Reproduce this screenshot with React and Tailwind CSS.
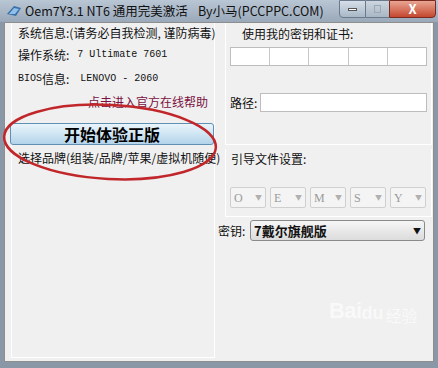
import React from 'react';

const CJK = { fontFamily: '"Noto Sans CJK SC", "Noto Sans", sans-serif' };

const KeyBox = () => <div className="h-[17px] flex-1 bg-white border-r border-[#c8c8c8] last:border-r-0" />;

const Combo = ({ letter }) => (
  <div className="flex h-[21px] w-[36px] items-center justify-between rounded-[2px] border border-[#cfcfcf] bg-[#f4f4f4] px-[3px]">
    <span className="font-['Liberation_Serif'] text-[12px] text-[#9a9a9a]">{letter}</span>
    <span className="text-[7px] text-[#b0b0b0]">▼</span>
  </div>
);

const Row = ({ className = '', children }) => (
  <div className={`flex h-[20px] items-center pl-[6px] ${className}`}>{children}</div>
);

export default function App() {
  return (
    <div className="relative h-[368px] w-[438px] overflow-hidden bg-[#8a97a6] whitespace-nowrap" style={CJK}>
      {/* title bar */}
      <div className="flex h-[22px] items-center bg-gradient-to-b from-[#b9c6d4] to-[#9aa9ba] pl-[6px] text-[12.5px] text-[#111]">
        <svg width="16" height="14" viewBox="0 0 16 14" className="mr-[3px]">
          <path d="M1 10 L8 2 L15 4 L10 12 Z" fill="#3a6fa8" />
          <path d="M3 10 L8 4 L13 5 L9 10 Z" fill="#8fc0ea" />
        </svg>
        <span className="w-[173px]">Oem7Y3.1 NT6 通用完美激活</span>
        <span>By小马(PCCPPC.COM)</span>
        <div className="ml-auto mr-[2px] flex h-[18px] self-start">
          <div className="flex w-[27px] items-center justify-center rounded-bl-[4px] border border-[#6b7a8a] bg-gradient-to-b from-[#d6dfe9] to-[#a9b7c6]">
            <div className="h-[3px] w-[9px] bg-white border border-[#555]" />
          </div>
          <div className="flex w-[23px] items-center justify-center border-y border-[#6b7a8a] bg-gradient-to-b from-[#cdd6e0] to-[#a9b6c4]">
            <div className="h-[8px] w-[7px] border border-[#9aa7b5]" />
          </div>
          <div className="flex w-[47px] items-center justify-center rounded-br-[4px] border border-[#7a2a20] bg-gradient-to-b from-[#e8a593] to-[#c4452d] text-[13px] font-bold text-white">
            X
          </div>
        </div>
      </div>

      {/* client area */}
      <div className="mx-[4px] flex h-[340px] border border-[#8e8e8e] bg-[#f0f0f0] text-[12px] text-[#111]">
        {/* left panel */}
        <div className="ml-[6px] mb-[3px] flex w-[204px] flex-col border-x border-b border-white">
          <Row>系统信息:(请务必自我检测, 谨防病毒)</Row>
          <Row className="mt-[2px]">
            操作系统: <span className="ml-[8px] font-['Liberation_Mono'] text-[10px] leading-none">7 Ultimate 7601</span>
          </Row>
          <Row className="mt-[4px]">
            <span className="font-['Liberation_Mono'] text-[10px] leading-none">BIOS</span>信息:
            <span className="ml-[11px] font-['Liberation_Mono'] text-[10px] leading-none">LENOVO - 2060</span>
          </Row>
          <Row className="mt-[3px] pl-[76px] text-[#7a1040]">点击进入官方在线帮助</Row>
          <button className="mt-[11px] -ml-[2px] h-[22px] w-[204px] rounded-[3px] border border-[#5f8fb2] bg-gradient-to-b from-[#eaf4fb] via-[#cfe5f3] to-[#b3d3ea] text-[16px] font-bold leading-[20px] text-black">
            开始体验正版
          </button>
          <Row className="mt-[3px]">选择品牌(组装/品牌/苹果/虚拟机随便)</Row>
        </div>

        {/* right panel */}
        <div className="ml-[10px] flex w-[207px] flex-col">
          <div className="flex h-[122px] flex-col border-x border-b border-white px-[4px]">
            <div className="mt-[1px] pl-[12px] leading-[20px]">使用我的密钥和证书:</div>
            <div className="mt-[3px] flex border border-[#bdbdbd]">
              <KeyBox /><KeyBox /><KeyBox /><KeyBox /><KeyBox />
            </div>
            <div className="mt-[27px] flex items-center">
              <span className="w-[30px]">路径:</span>
              <div className="h-[19px] flex-1 border border-[#bdbdbd] bg-white" />
            </div>
          </div>
          <div className="mt-[4px] flex h-[68px] flex-col border border-white border-t-0 px-[4px]">
            <div className="pl-[1px] leading-[20px]">引导文件设置:</div>
            <div className="mt-[18px] flex gap-[4px]">
              <Combo letter="O" /><Combo letter="E" /><Combo letter="M" /><Combo letter="S" /><Combo letter="Y" />
            </div>
          </div>
          <div className="mt-[3px] -ml-[7px] flex items-center">
            <span className="w-[32px]">密钥:</span>
            <div className="flex h-[21px] w-[175px] items-center justify-between rounded-[3px] border border-[#8a8a8a] bg-gradient-to-b from-[#f6f6f6] to-[#dcdcdc] px-[3px]">
              <span className="text-[13px] font-bold">7戴尔旗舰版</span>
              <span className="text-[8px]">▼</span>
            </div>
          </div>
          <div className="mt-auto mb-[34px] ml-[104px] flex items-end text-white">
            <span className="font-['Liberation_Sans'] text-[22px] font-bold tracking-tight opacity-60">Bai</span>
            <span className="font-['Liberation_Sans'] text-[18px] font-bold opacity-60">du</span>
            <span className="ml-[2px] text-[16px] opacity-60">经验</span>
          </div>
        </div>
      </div>

      {/* annotation ellipse */}
      <svg className="pointer-events-none absolute left-0 top-0" width="438" height="368">
        <ellipse cx="110" cy="142" rx="106" ry="37" transform="rotate(3 110 142)" fill="none" stroke="#c0262a" strokeWidth="2.5" />
      </svg>
    </div>
  );
}
